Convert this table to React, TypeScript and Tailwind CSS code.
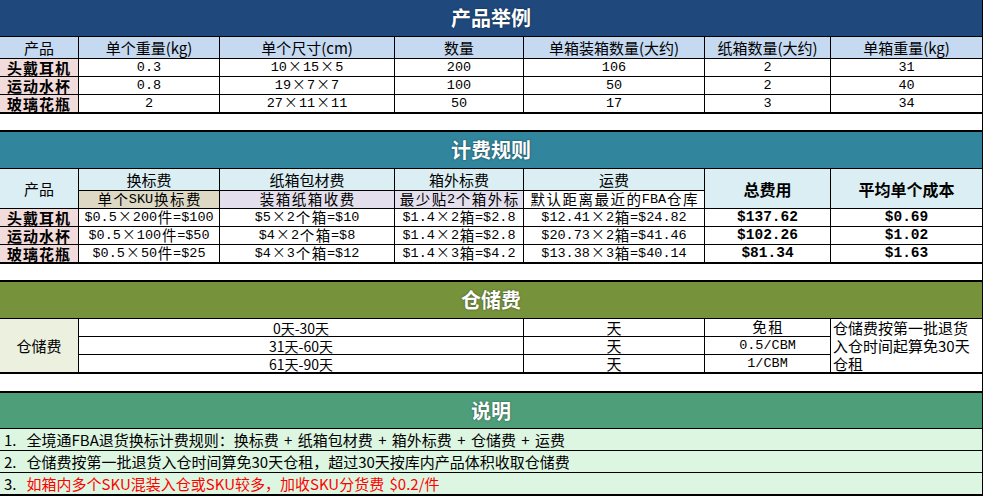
import React from "react";

const COLS = "grid-cols-[78px_140px_174px_128px_180px_125px_151px]";
const SANS = "font-['Noto_Sans_CJK_SC',sans-serif]";
const MONO = "font-['Liberation_Mono','Noto_Sans_CJK_SC',monospace]";

// SimSun-like text: latin half width (mono), CJK full width
function Sim({ text, bold = false }: { text: string; bold?: boolean }) {
  const parts = text.split(/([^\x00-\x7f])/).filter((p) => p !== "");
  return (
    <span
      className={`inline-flex items-center h-[16px] ${MONO} ${bold ? "font-bold text-[14.5px]" : "text-[13.5px]"} whitespace-pre leading-none`}
    >
      {parts.map((p, i) =>
        p === "×" ? (
          <span
            key={i}
            className="w-[16px] h-[14px] flex items-center justify-center font-['DejaVu_Sans_ExtraLight','DejaVu_Sans',sans-serif] font-extralight text-[17px] leading-none -translate-y-[1px]"
          >
            ×
          </span>
        ) : /[^\x00-\x7f]/.test(p) ? (
          <span key={i} className={`w-[16px] text-center ${SANS} text-[14.5px] font-normal leading-none`}>
            {p}
          </span>
        ) : (
          <span key={i}>{p}</span>
        )
      )}
    </span>
  );
}

const Title = ({ text, span = "col-span-7", bg }: { text: string; span?: string; bg: string }) => (
  <div
    className={`${span} ${bg} flex items-center justify-center text-white font-bold text-[20px] ${SANS} [text-shadow:0_0_2px_rgba(0,0,0,0.55)]`}
  >
    {text}
  </div>
);

const Cell = ({
  children,
  className = "",
}: {
  children: React.ReactNode;
  className?: string;
}) => (
  <div className={`flex items-center justify-center leading-none overflow-hidden text-black ${className}`}>
    {children}
  </div>
);

const Name = ({ text }: { text: string }) => (
  <Cell className={`bg-[#f2dcdb] ${SANS} font-bold text-[15px] tracking-[1px]`}>{text}</Cell>
);

const Spacer = ({ h }: { h: string }) => <div className={`${h} w-[983px] bg-white border-r border-black`} />;

const products = [
  ["头戴耳机", "0.3", "10×15×5", "200", "106", "2", "31"],
  ["运动水杯", "0.8", "19×7×7", "100", "50", "2", "40"],
  ["玻璃花瓶", "2", "27×11×11", "50", "17", "3", "34"],
];

const fees = [
  ["头戴耳机", "$0.5×200件=$100", "$5×2个箱=$10", "$1.4×2箱=$2.8", "$12.41×2箱=$24.82", "$137.62", "$0.69"],
  ["运动水杯", "$0.5×100件=$50", "$4×2个箱=$8", "$1.4×2箱=$2.8", "$20.73×2箱=$41.46", "$102.26", "$1.02"],
  ["玻璃花瓶", "$0.5×50件=$25", "$4×3个箱=$12", "$1.4×3箱=$4.2", "$13.38×3箱=$40.14", "$81.34", "$1.63"],
];

const storage = [
  ["0天-30天", "免租"],
  ["31天-60天", "0.5/CBM"],
  ["61天-90天", "1/CBM"],
];

export default function App() {
  const head = `bg-[#c5d9f1] ${SANS} text-[15px]`;
  const head2 = `bg-[#daeef3] ${SANS} text-[15px]`;
  const note = `bg-[#ddf6e1] ${SANS} text-[15px] leading-[21px] pl-[4px] text-black whitespace-nowrap [word-spacing:2px]`;
  return (
    <div className="w-[984px] h-[496px] bg-white overflow-hidden flex flex-col">
      {/* 产品举例 */}
      <div className={`grid ${COLS} grid-rows-[36px_21px_17px_17px_17px] gap-px bg-black pr-px pb-[2px] w-[983px]`}>
        <Title text="产品举例" bg="bg-[#1f497d]" />
        {["产品", "单个重量(kg)", "单个尺寸(cm)", "数量", "单箱装箱数量(大约)", "纸箱数量(大约)", "单箱重量(kg)"].map((h) => (
          <Cell key={h} className={head}>
            {h}
          </Cell>
        ))}
        {products.map((r) => (
          <React.Fragment key={r[0]}>
            <Name text={r[0]} />
            {r.slice(1).map((v, i) => (
              <Cell key={i} className="bg-white">
                <Sim text={v} />
              </Cell>
            ))}
          </React.Fragment>
        ))}
      </div>

      <Spacer h="h-[16px]" />

      {/* 计费规则 */}
      <div className={`grid ${COLS} grid-rows-[36px_21px_17px_17px_17px_17px] gap-px bg-black pr-px pt-[2px] pb-[2px] w-[983px]`}>
        <Title text="计费规则" bg="bg-[#31859c]" />
        <Cell className={`${head2} row-span-2`}>产品</Cell>
        <Cell className={head2}>换标费</Cell>
        <Cell className={head2}>纸箱包材费</Cell>
        <Cell className={head2}>箱外标费</Cell>
        <Cell className={head2}>运费</Cell>
        <Cell className={`${head2} row-span-2 font-bold text-[16px]`}>总费用</Cell>
        <Cell className={`${head2} row-span-2 font-bold text-[16px]`}>平均单个成本</Cell>
        <Cell className="bg-[#ddd9c4]">
          <Sim text="单个SKU换标费" />
        </Cell>
        <Cell className="bg-[#e4dfec]">
          <Sim text="装箱纸箱收费" />
        </Cell>
        <Cell className="bg-[#e4dfec]">
          <Sim text="最少贴2个箱外标" />
        </Cell>
        <Cell className="bg-white">
          <Sim text="默认距离最近的FBA仓库" />
        </Cell>
        {fees.map((r) => (
          <React.Fragment key={r[0]}>
            <Name text={r[0]} />
            {r.slice(1).map((v, i) => (
              <Cell key={i} className="bg-white">
                <Sim text={v} bold={i >= 4} />
              </Cell>
            ))}
          </React.Fragment>
        ))}
      </div>

      <Spacer h="h-[16px]" />

      {/* 仓储费 */}
      <div className={`grid ${COLS} grid-rows-[36px_17px_17px_17px] gap-px bg-black pr-px pt-[2px] pb-[2px] w-[983px]`}>
        <Title text="仓储费" bg="bg-[#76933c]" />
        <Cell className={`row-span-3 bg-[#ebf1de] ${SANS} text-[15px]`}>仓储费</Cell>
        {storage.map(([d, v], i) => (
          <React.Fragment key={d}>
            <Cell className={`col-span-3 bg-white ${SANS} text-[14px]`}>{d}</Cell>
            <Cell className={`bg-white ${SANS} text-[15px]`}>天</Cell>
            <Cell className="bg-white">
              <Sim text={v} />
            </Cell>
            {i === 0 && (
              <div className={`row-span-3 bg-white ${SANS} text-[15px] leading-[18px] pl-[2px] text-black`}>
                仓储费按第一批退货入仓时间起算免30天仓租
              </div>
            )}
          </React.Fragment>
        ))}
      </div>

      <Spacer h="h-[17px]" />

      {/* 说明 */}
      <div className={`grid grid-cols-1 grid-rows-[35px_21px_21px_21px] gap-px bg-black pr-px pt-[2px] pb-[2px] w-[983px]`}>
        <Title text="说明" span="col-span-1" bg="bg-[#4e9e7a]" />
        <div className={note}>
          1.<span className="ml-[10px]">全境通FBA退货换标计费规则：换标费 + 纸箱包材费 + 箱外标费 + 仓储费 + 运费</span>
        </div>
        <div className={note}>
          2.<span className="ml-[10px]">仓储费按第一批退货入仓时间算免30天仓租，超过30天按库内产品体积收取仓储费</span>
        </div>
        <div className={note}>
          3.<span className="ml-[10px] text-[#ff0000]">如箱内多个SKU混装入仓或SKU较多，加收SKU分货费 $0.2/件</span>
        </div>
      </div>
    </div>
  );
}
